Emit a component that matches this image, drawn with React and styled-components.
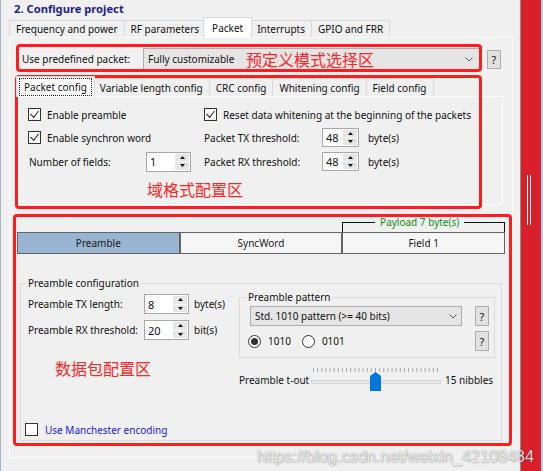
import React from "react";
import styled, { createGlobalStyle } from "styled-components";

const UI_FONT = `"Noto Sans", "Open Sans", "DejaVu Sans", sans-serif`;
const CJK_FONT = `"Noto Sans CJK SC", "Noto Sans", sans-serif`;

const GlobalStyle = createGlobalStyle`
  * { box-sizing: border-box; }
  html, body { margin: 0; padding: 0; background: #f0f0f0; }
  body { font-family: ${UI_FONT}; }
`;

const Screen = styled.div`
  position: relative;
  display: flex;
  width: 543px;
  height: 471px;
  overflow: hidden;
  background: #f0f0f0;
  font-family: ${UI_FONT};
  font-size: 10px;
  color: #111;
`;

const Main = styled.div`
  display: flex;
  flex-direction: column;
  width: 520px;
  flex: none;
  border-left: 1px solid #a9b5c4;
`;

const Title = styled.div`
  height: 17px;
  padding-left: 13px;
  line-height: 17px;
  font-size: 11.2px;
  font-weight: 700;
  color: #1e1e8c;
`;

/* ---------- tab control ---------- */

const TabStrip = styled.div`
  position: relative;
  z-index: 1;
  display: flex;
  align-items: flex-end;
  height: ${(p) => p.$height}px;
  margin: ${(p) => p.$top || 0}px 0 -1px ${(p) => p.$left}px;
`;

const Tab = styled.div`
  position: relative;
  flex: none;
  display: flex;
  align-items: center;
  height: ${(p) => (p.$active ? "100%" : `${p.$h}px`)};
  margin: ${(p) => (p.$active ? "0 -2px 0 -2px" : "0 -1px 1px 0")};
  padding: 0 ${(p) => (p.$active ? p.$activePad : 6)}px;
  background: ${(p) => (p.$active ? "#ffffff" : "#f0f0f0")};
  border: 1px solid #d9d9d9;
  border-bottom: none;
  z-index: ${(p) => (p.$active ? 2 : 1)};
  white-space: nowrap;
`;

const FocusText = styled.span`
  padding: 0 4px;
  line-height: 16px;
  outline: 1px dotted #222;
`;

const OuterPage = styled.div`
  display: flex;
  flex-direction: column;
  width: 504px;
  height: 421px;
  margin-left: 8px;
  padding: 10px 7px 0 7px;
  border: 1px solid #fcfcfc;
`;

const InnerPage = styled.div`
  width: 485px;
  height: 109px;
  margin-left: 1px;
  padding: 6px 0 0 9px;
  border: 1px solid #fcfcfc;
`;

/* ---------- common controls ---------- */

const Row = styled.div`
  display: flex;
  align-items: center;
  height: ${(p) => p.$h || 20}px;
  padding-left: ${(p) => p.$pl || 0}px;
  margin-top: ${(p) => p.$mt || 0}px;
`;

const Label = styled.span`
  flex: none;
  width: ${(p) => (p.$w ? `${p.$w}px` : "auto")};
  margin-left: ${(p) => p.$ml || 0}px;
  color: ${(p) => p.$color || "#111"};
  white-space: nowrap;
`;

const Combo = styled.div`
  flex: none;
  display: flex;
  align-items: center;
  width: ${(p) => p.$w}px;
  height: ${(p) => p.$h}px;
  padding: 0 ${(p) => p.$pr}px 0 4px;
  background: #e5e5e5;
  border: 1px solid #adadad;
`;

const ComboText = styled.span`
  flex: 1;
  white-space: nowrap;
`;

const HelpButton = styled.span`
  flex: none;
  display: flex;
  align-items: center;
  justify-content: center;
  width: 14px;
  height: ${(p) => p.$h || 20}px;
  margin-left: ${(p) => (p.$ml === "auto" ? "auto" : `${p.$ml || 0}px`)};
  background: #e1e1e1;
  border: 1px solid #adadad;
  font-size: 11px;
  color: #111;
`;

const Chevron = () => (
  <svg width="8" height="5" viewBox="0 0 8 5">
    <path d="M0.5 0.5 L4 4 L7.5 0.5" fill="none" stroke="#555" strokeWidth="1" />
  </svg>
);

const BoxFrame = styled.span`
  flex: none;
  display: inline-flex;
  align-items: center;
  justify-content: center;
  width: 13px;
  height: 13px;
  margin-left: ${(p) => p.$ml || 0}px;
  background: #fff;
  border: 1px solid #333;
`;

const CheckBox = ({ checked, ml }) => (
  <BoxFrame $ml={ml}>
    {checked && (
      <svg width="11" height="11" viewBox="0 0 11 11">
        <path d="M1.5 5 L4.8 8.3 L9.5 2" fill="none" stroke="#333" strokeWidth="1.1" />
      </svg>
    )}
  </BoxFrame>
);

const RadioDot = styled.span`
  flex: none;
  display: inline-flex;
  align-items: center;
  justify-content: center;
  width: 13px;
  height: 13px;
  margin-left: ${(p) => p.$ml || 0}px;
  border-radius: 50%;
  background: #fff;
  border: 1px solid #333;
  &::after {
    content: "";
    display: ${(p) => (p.$on ? "block" : "none")};
    width: 7px;
    height: 7px;
    border-radius: 50%;
    background: #333;
  }
`;

const SpinBox = styled.div`
  flex: none;
  display: flex;
  width: ${(p) => p.$w}px;
  height: ${(p) => p.$h}px;
  padding: 1px;
  background: #fff;
  border: 1px solid #a8a8a8;
`;

const SpinValue = styled.span`
  flex: 1;
  display: flex;
  align-items: center;
  padding-left: 2px;
  font-size: 11px;
`;

const SpinButtons = styled.div`
  display: flex;
  flex-direction: column;
  gap: 1px;
  width: 14px;
`;

const SpinButton = styled.span`
  flex: 1;
  display: flex;
  align-items: center;
  justify-content: center;
  background: #e6e6e6;
`;

const Spinner = ({ value, w = 45, h = 20 }) => (
  <SpinBox $w={w} $h={h}>
    <SpinValue>{value}</SpinValue>
    <SpinButtons>
      <SpinButton>
        <svg width="5" height="3" viewBox="0 0 5 3">
          <path d="M0 3 L2.5 0 L5 3 Z" fill="#111" />
        </svg>
      </SpinButton>
      <SpinButton>
        <svg width="5" height="3" viewBox="0 0 5 3">
          <path d="M0 0 L5 0 L2.5 3 Z" fill="#111" />
        </svg>
      </SpinButton>
    </SpinButtons>
  </SpinBox>
);

/* ---------- packet config grid ---------- */

const FieldGrid = styled.div`
  display: grid;
  grid-template-columns: 176px auto;
  grid-template-rows: 23px 23px 25px;
  align-items: center;
`;

const Cell = styled.div`
  display: flex;
  align-items: center;
`;

/* ---------- packet structure bar ---------- */

const ThreeCols = styled.div`
  display: grid;
  grid-template-columns: repeat(3, 1fr);
  height: ${(p) => p.$h}px;
  margin-top: ${(p) => p.$mt || 0}px;
`;

const Bracket = styled.div`
  grid-column: 3;
  display: flex;
  align-items: flex-start;
  height: 10px;
  &::before,
  &::after {
    content: "";
    height: 10px;
    border-top: 1px solid #111;
  }
  &::before {
    flex: 4;
    border-left: 1px solid #111;
  }
  &::after {
    flex: 5;
    border-right: 1px solid #111;
  }
`;

const BracketLabel = styled.span`
  padding: 0 5px;
  margin-top: -7px;
  line-height: 14px;
  color: #168a16;
  white-space: nowrap;
`;

const Segment = styled.div`
  display: flex;
  align-items: center;
  justify-content: center;
  background: ${(p) => (p.$on ? "#99b4d1" : "#f6f6f6")};
  border: 1px solid #646464;
  color: #1a1a1a;
`;

/* ---------- group boxes ---------- */

const GroupBox = styled.fieldset`
  min-width: 0;
  margin: ${(p) => p.$margin};
  padding: ${(p) => p.$padding};
  border: 1px solid #dcdcdc;
`;

const GroupLegend = styled.legend`
  padding: 0 2px;
  margin-left: ${(p) => p.$ml}px;
  line-height: 14px;
  font-size: 10px;
  color: #111;
`;

const GroupBody = styled.div`
  display: grid;
  grid-template-columns: 211px 256px;
  align-items: start;
`;

const Column = styled.div`
  display: flex;
  flex-direction: column;
  gap: ${(p) => p.$gap || 0}px;
  margin-top: ${(p) => p.$mt || 0}px;
`;

const Slider = () => {
  const ticks = [];
  for (let i = 0; i <= 30; i++) {
    const x = 2.5 + (i * 124) / 30;
    ticks.push(<line key={i} x1={x} y1="0" x2={x} y2="4" stroke="#a8a8a8" strokeWidth="1" />);
  }
  return (
    <svg width="130" height="24" viewBox="0 0 130 24">
      {ticks}
      <rect x="0.5" y="12.5" width="129" height="3" fill="#e7e7e7" stroke="#d6d6d6" />
      <path d="M59 23 L59 8 L64.5 4 L70 8 L70 23 Z" fill="#0078d7" />
    </svg>
  );
};

/* ---------- scroll rail ---------- */

const ScrollRail = styled.div`
  flex: none;
  display: flex;
  flex-direction: column;
  width: 23px;
  background: #d81f2a;
  border-left: 1px solid #8e8e8e;
  border-right: 2px solid #a9d3ee;
`;

const Grip = styled.div`
  width: 4px;
  height: 50px;
  margin: 175px 0 0 6px;
  border-left: 1px solid #fff;
  border-right: 1px solid #fff;
`;

/* ---------- hand-drawn red notes on top ---------- */

const Note = styled.div`
  position: absolute;
  left: ${(p) => p.$x}px;
  top: ${(p) => p.$y}px;
  width: ${(p) => p.$w}px;
  height: ${(p) => p.$h}px;
  border: 3px solid #ff1c1c;
  border-radius: 4px;
  pointer-events: none;
`;

const NoteText = styled.span`
  position: absolute;
  left: ${(p) => p.$x}px;
  top: ${(p) => p.$y}px;
  font-family: ${CJK_FONT};
  font-size: 16px;
  line-height: 16px;
  color: #ff2424;
  white-space: nowrap;
`;

const Watermark = styled.div`
  position: absolute;
  left: 257px;
  top: 446px;
  font-family: "Liberation Sans", Arial, sans-serif;
  font-size: 16.3px;
  line-height: 20px;
  color: rgba(255, 255, 255, 0.85);
  text-shadow: 0 0 1px rgba(0, 0, 0, 0.45), 1px 1px 2px rgba(0, 0, 0, 0.2);
  white-space: nowrap;
  pointer-events: none;
`;

const outerTabs = ["Frequency and power", "RF parameters", "Packet", "Interrupts", "GPIO and FRR"];
const innerTabs = ["Packet config", "Variable length config", "CRC config", "Whitening config", "Field config"];

export default function App() {
  return (
    <>
      <GlobalStyle />
      <Screen>
        <Main>
          <Title>2. Configure project</Title>
          <TabStrip $height={21} $left={8}>
            {outerTabs.map((t) => (
              <Tab key={t} $active={t === "Packet"} $h={17} $activePad={8}>
                {t}
              </Tab>
            ))}
          </TabStrip>
          <OuterPage>
            <Row $h={22} $pl={5}>
              <Label $w={121}>Use predefined packet:</Label>
              <Combo $w={338} $h={22} $pr={7}>
                <ComboText>Fully customizable</ComboText>
                <Chevron />
              </Combo>
              <HelpButton $h={19} $ml={6}>?</HelpButton>
            </Row>

            <TabStrip $height={21} $left={1} $top={6}>
              {innerTabs.map((t, i) =>
                i === 0 ? (
                  <Tab key={t} $active $activePad={3}>
                    <FocusText>{t}</FocusText>
                  </Tab>
                ) : (
                  <Tab key={t} $h={18}>
                    {t}
                  </Tab>
                )
              )}
            </TabStrip>
            <InnerPage>
              <FieldGrid>
                <Cell>
                  <CheckBox checked />
                  <Label $ml={6}>Enable preamble</Label>
                </Cell>
                <Cell>
                  <CheckBox checked />
                  <Label $ml={6}>Reset data whitening at the beginning of the packets</Label>
                </Cell>
                <Cell>
                  <CheckBox checked />
                  <Label $ml={6}>Enable synchron word</Label>
                </Cell>
                <Cell>
                  <Label $w={118}>Packet TX threshold:</Label>
                  <Spinner value="48" w={37} h={19} />
                  <Label $ml={9}>byte(s)</Label>
                </Cell>
                <Cell>
                  <Label $w={117} $ml={1}>Number of fields:</Label>
                  <Spinner value="1" w={45} h={20} />
                </Cell>
                <Cell>
                  <Label $w={118}>Packet RX threshold:</Label>
                  <Spinner value="48" w={37} h={19} />
                  <Label $ml={9}>byte(s)</Label>
                </Cell>
              </FieldGrid>
            </InnerPage>

            <ThreeCols $h={10} $mt={17}>
              <Bracket>
                <BracketLabel>Payload 7 byte(s)</BracketLabel>
              </Bracket>
            </ThreeCols>
            <ThreeCols $h={22}>
              <Segment $on>Preamble</Segment>
              <Segment>SyncWord</Segment>
              <Segment>Field 1</Segment>
            </ThreeCols>

            <GroupBox $margin="22px 3px 0 3px" $padding="4px 6px 4px 7px">
              <GroupLegend $ml={-2}>Preamble configuration</GroupLegend>
              <GroupBody>
                <Column $gap={6}>
                  <Row>
                    <Label $w={116}>Preamble TX length:</Label>
                    <Spinner value="8" />
                    <Label $ml={5}>byte(s)</Label>
                  </Row>
                  <Row>
                    <Label $w={116}>Preamble RX threshold:</Label>
                    <Spinner value="20" />
                    <Label $ml={5}>bit(s)</Label>
                  </Row>
                </Column>
                <Column $mt={-4}>
                  <GroupBox $margin="0" $padding="2px 5px 6px 10px">
                    <GroupLegend $ml={-4}>Preamble pattern</GroupLegend>
                    <Row>
                      <Combo $w={212} $h={20} $pr={4}>
                        <ComboText>Std. 1010 pattern (&gt;= 40 bits)</ComboText>
                        <Chevron />
                      </Combo>
                      <HelpButton $ml={13}>?</HelpButton>
                    </Row>
                    <Row $mt={5}>
                      <RadioDot $on $ml={-2} />
                      <Label $ml={7}>1010</Label>
                      <RadioDot $ml={11} />
                      <Label $ml={7}>0101</Label>
                      <HelpButton $ml="auto">?</HelpButton>
                    </Row>
                  </GroupBox>
                  <Row $h={24} $mt={10}>
                    <Label $w={72}>Preamble t-out</Label>
                    <Slider />
                    <Label $ml={4}>15 nibbles</Label>
                  </Row>
                </Column>
              </GroupBody>
              <Row $h={13} $mt={31}>
                <CheckBox ml={-3} />
                <Label $ml={7} $color="#1616e8">Use Manchester encoding</Label>
              </Row>
            </GroupBox>
          </OuterPage>
        </Main>
        <ScrollRail>
          <Grip />
        </ScrollRail>

        <Note $x={16} $y={44} $w={466} $h={28}>
          <NoteText $x={227} $y={4}>预定义模式选择区</NoteText>
        </Note>
        <Note $x={15} $y={75} $w={467} $h={134}>
          <NoteText $x={129} $y={103}>域格式配置区</NoteText>
        </Note>
        <Note $x={13} $y={214} $w={499} $h={232}>
          <NoteText $x={39} $y={143}>数据包配置区</NoteText>
        </Note>

        <Watermark>https://blog.csdn.net/weixin_42108484</Watermark>
      </Screen>
    </>
  );
}
